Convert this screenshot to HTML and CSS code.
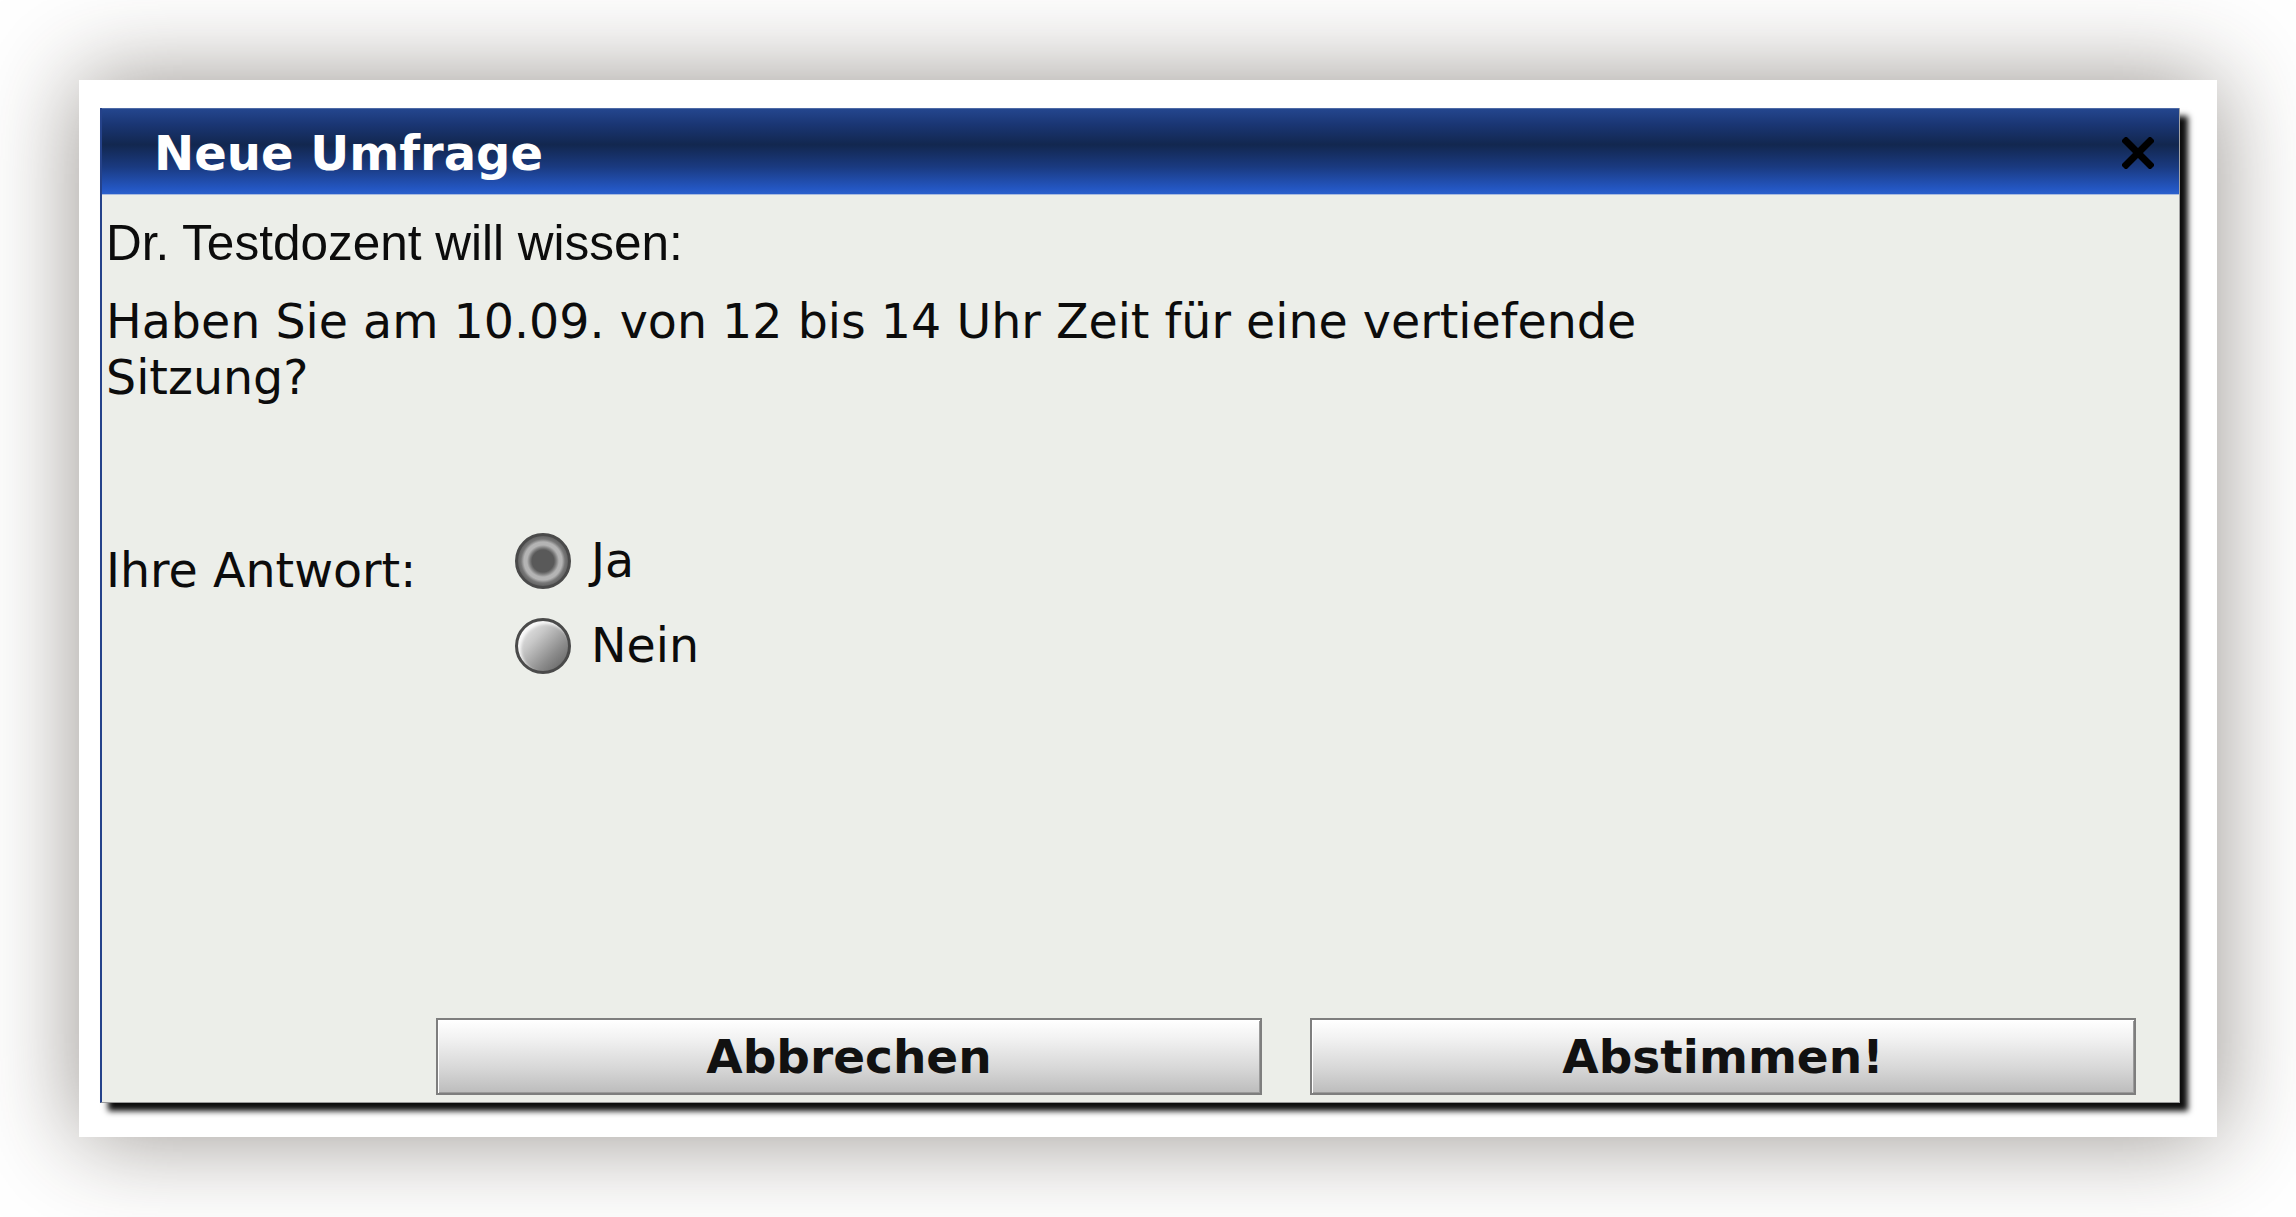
FILE: index.html
```html
<!DOCTYPE html>
<html lang="de">
  <head>
    <meta charset="UTF-8" />
    <meta name="viewport" content="width=device-width, initial-scale=1.0" />
    <title>Neue Umfrage</title>
    <link rel="stylesheet" href="styles.css">
  </head>
  <body>
    <div class="frame">
      <form class="dialog" id="pollForm">
        <div class="titlebar">
          <h1>Neue Umfrage</h1>
          <button type="button" class="close" aria-label="Schließen">
            <svg width="32" height="32" viewBox="0 0 32 32">
              <path d="M4 4 L28 28 M28 4 L4 28" stroke="#000" stroke-width="7" stroke-linecap="square" fill="none" />
            </svg>
          </button>
        </div>
        <div class="content">
          <p class="asker">Dr. Testdozent will wissen:</p>
          <p class="question">Haben Sie am 10.09. von 12 bis 14 Uhr Zeit für eine vertiefende Sitzung?</p>
          <div class="answer">
            <div class="answer-label">Ihre Antwort:</div>
            <div class="options">
              <label class="option"><input type="radio" name="vote" value="ja" checked> Ja</label>
              <label class="option"><input type="radio" name="vote" value="nein"> Nein</label>
            </div>
          </div>
          <div class="actions">
            <button type="button" class="btn">Abbrechen</button>
            <button type="submit" class="btn">Abstimmen!</button>
          </div>
        </div>
      </form>
    </div>
  </body>
</html>
```

FILE: styles.css
```css
body {
  margin: 0;
  padding: 80px 0 80px 79px;
  background: #fff;
}
.frame {
  width: 2138px;
  height: 1057px;
  padding: 28px 0 0 21px;
  box-sizing: border-box;
  background: #fff;
  box-shadow: 0 0 90px rgba(50, 40, 30, 0.5);
}
.dialog {
  width: 2080px;
  height: 995px;
  margin: 0;
  box-sizing: border-box;
  display: flex;
  flex-direction: column;
  background: #eceee9;
  border-left: 2px solid #25428a;
  border-right: 1px solid #a3a3a3;
  border-bottom: 1px solid #9a9a9a;
  box-shadow: 8px 8px 6px rgba(0, 0, 0, 0.95);
}
.titlebar {
  height: 87px;
  box-sizing: border-box;
  display: flex;
  align-items: center;
  justify-content: space-between;
  padding: 3px 25px 0 52px;
  border-top: 1px solid #4d6aa6;
  border-bottom: 1px solid #a9bbdf;
  background: linear-gradient(#24468e 0%, #1a3674 18%, #12274f 42%, #1a3a80 68%, #2457c3 94%, #2b60cc 100%);
}
.titlebar h1 {
  margin: 0;
  font: bold 48px/56px "DejaVu Sans", Verdana, sans-serif;
  color: #fff;
}
.close {
  padding: 0;
  border: none;
  background: none;
  display: flex;
  cursor: pointer;
}
.content {
  flex: 1;
  display: flex;
  flex-direction: column;
  padding: 20px 43px 7px 4px;
  color: #0c0c0c;
}
.asker {
  margin: 0;
  font: 49.5px/56px "Liberation Sans", Arial, sans-serif;
}
.question {
  margin: 23px 0 0;
  width: 1640px;
  font: 47.5px/56px "DejaVu Sans", Verdana, sans-serif;
}
.answer {
  display: flex;
  margin-top: 112px;
  font: 47.5px/56px "DejaVu Sans", Verdana, sans-serif;
}
.answer-label {
  width: 409px;
  padding-top: 25px;
}
.options {
  display: flex;
  flex-direction: column;
}
.option {
  display: flex;
  align-items: center;
  gap: 20px;
  height: 85px;
}
.option input {
  appearance: none;
  -webkit-appearance: none;
  margin: 0;
  width: 56px;
  height: 56px;
  border-radius: 50%;
  border: 3px solid #4a4a4a;
  box-sizing: border-box;
  background: linear-gradient(135deg, #f4f4f4 0%, #c8c8c8 35%, #8a8a8a 70%, #5c5c5c 100%);
  box-shadow: inset 3px 3px 3px rgba(255, 255, 255, 0.8);
}
.option input:checked {
  background: radial-gradient(circle, #595959 0 11px, #7a7a7a 13px, #b4b4b4 16px 19px, #777 22px, #5d5d5d 26px);
  box-shadow: none;
}
.actions {
  margin-top: auto;
  display: flex;
  justify-content: flex-end;
  gap: 48px;
}
.btn {
  width: 826px;
  height: 77px;
  padding: 0;
  border: 2px solid #7e7e7e;
  box-shadow: inset 1px 1px 0 #fff, inset -1px -1px 0 #9a9a9a;
  background: linear-gradient(#ffffff 0%, #f2f2f2 25%, #d8d8d8 65%, #bcbcbc 100%);
  font: bold 47px "DejaVu Sans", Verdana, sans-serif;
  color: #111;
  cursor: pointer;
}
```
